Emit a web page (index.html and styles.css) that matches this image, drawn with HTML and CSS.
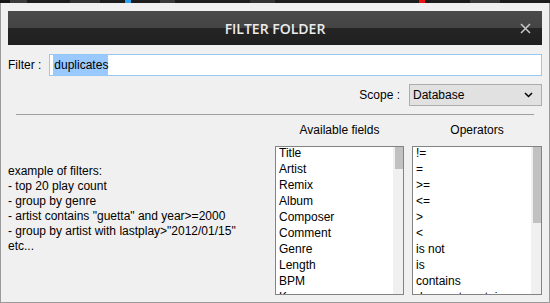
FILE: index.html
```html
<!DOCTYPE html>
<html lang="en">
  <head>
    <meta charset="UTF-8" />
    <title>Filter Folder</title>
    <link rel="stylesheet" href="styles.css">
  </head>
  <body>
    <div class="backdrop"></div>
    <div class="dialog">
      <div class="titlebar">
        <span class="title">FILTER FOLDER</span>
        <svg class="close" width="11" height="11" viewBox="0 0 11 11">
          <path d="M1 1 L10 10 M10 1 L1 10" stroke="#c8c8c8" stroke-width="1.5" fill="none" />
        </svg>
      </div>

      <div class="filter-row">
        <span class="label">Filter :</span>
        <div class="text-input"><span class="selected">duplicates</span></div>
      </div>

      <div class="scope-row">
        <span class="label">Scope :</span>
        <div class="select">
          <span>Database</span>
          <svg width="9" height="6" viewBox="0 0 9 6">
            <path d="M1 1 L4.5 4.5 L8 1" stroke="#000" stroke-width="1.5" fill="none" />
          </svg>
        </div>
      </div>

      <div class="separator"></div>

      <div class="fields-area">
        <div class="examples">
          <div>example of filters:</div>
          <div>- top 20 play count</div>
          <div>- group by genre</div>
          <div>- artist contains "guetta" and year&gt;=2000</div>
          <div>- group by artist with lastplay&gt;"2012/01/15"</div>
          <div>etc...</div>
        </div>

        <div class="column fields-col">
          <div class="col-head">Available fields</div>
          <div class="listbox">
            <ul class="items">
              <li>Title</li>
              <li>Artist</li>
              <li>Remix</li>
              <li>Album</li>
              <li>Composer</li>
              <li>Comment</li>
              <li>Genre</li>
              <li>Length</li>
              <li>BPM</li>
              <li>Key</li>
            </ul>
            <div class="scrollbar"><div class="thumb fields-thumb"></div></div>
          </div>
        </div>

        <div class="column ops-col">
          <div class="col-head">Operators</div>
          <div class="listbox">
            <ul class="items">
              <li>!=</li>
              <li>=</li>
              <li>&gt;=</li>
              <li>&lt;=</li>
              <li>&gt;</li>
              <li>&lt;</li>
              <li>is not</li>
              <li>is</li>
              <li>contains</li>
              <li>does not contain</li>
            </ul>
            <div class="scrollbar"><div class="thumb ops-thumb"></div></div>
          </div>
        </div>
      </div>
    </div>
  </body>
</html>
```

FILE: styles.css
```css
* {
  margin: 0;
  padding: 0;
  box-sizing: border-box;
}

body {
  width: 550px;
  height: 303px;
  overflow: hidden;
  background: #f0f0f0;
  font-family: "Liberation Sans", Arial, sans-serif;
  font-size: 12px;
  color: #000;
}

/* strip of the app window behind the dialog */
.backdrop {
  height: 3px;
  background: linear-gradient(to right,
    #151515 0 10px, #3c3c3c 10px 27px, #1c1c1c 27px 70px, #333 70px 100px,
    #1c1c1c 100px 125px, #2ba4f4 125px 131px, #1c1c1c 131px 160px,
    #3a3a3a 160px 175px, #1c1c1c 175px 250px, #333 250px 275px,
    #1c1c1c 275px 419px, #ee1111 419px 425px, #1c1c1c 425px 470px,
    #3a3a3a 470px 500px, #1c1c1c 500px);
}

.dialog {
  height: 300px;
  border: 1px solid #9a9a9a;
  border-top: none;
  padding: 8px 7px 0;
  background: #f0f0f0;
}

.titlebar {
  height: 34px;
  display: grid;
  grid-template-columns: 1fr auto 1fr;
  align-items: center;
  background: linear-gradient(#4b4b4b, #444 50%, #252525 50%, #1f1f1f);
}

.title {
  grid-column: 2;
  font-family: "Open Sans", sans-serif;
  font-size: 14px;
  font-weight: 600;
  color: #ececec;
}

.close {
  grid-column: 3;
  justify-self: end;
  margin-right: 11px;
}

.filter-row {
  display: flex;
  align-items: center;
  gap: 8px;
  margin-top: 9px;
}

.label {
  white-space: nowrap;
}

.text-input {
  flex: 1;
  height: 22px;
  border: 1px solid #95c8f2;
  background: #fff;
  padding-left: 3px;
  line-height: 20px;
}

.selected {
  display: inline-block;
  background: #99c9ff;
  padding-left: 1px;
}

.scope-row {
  display: flex;
  justify-content: flex-end;
  align-items: center;
  gap: 9px;
  margin-top: 8px;
}

.select {
  width: 133px;
  height: 22px;
  border: 1px solid #adadad;
  background: #e1e1e1;
  display: flex;
  align-items: center;
  justify-content: space-between;
  padding: 0 8px 0 3px;
}

.separator {
  height: 1px;
  margin: 8px 8px 0;
  background: #a0a0a0;
}

.fields-area {
  display: flex;
  gap: 8px;
  margin-top: 8px;
}

.examples {
  flex: 1;
  padding-top: 41px;
  line-height: 15px;
  white-space: nowrap;
}

.column {
  display: flex;
  flex-direction: column;
}

.fields-col {
  width: 129px;
}

.ops-col {
  width: 130px;
}

.col-head {
  text-align: center;
  line-height: 15px;
}

.listbox {
  margin-top: 8px;
  height: 149px;
  border: 1px solid #838383;
  background: #fff;
  display: flex;
  overflow: hidden;
}

.items {
  flex: 1;
  list-style: none;
  padding-left: 3px;
  white-space: nowrap;
  overflow: hidden;
}

.items li {
  height: 16px;
  line-height: 13px;
}

.scrollbar {
  width: 10px;
  background: #f0f0f0;
  padding-left: 2px;
}

.thumb {
  width: 8px;
  background: #c1c1c1;
}

.fields-thumb {
  height: 22px;
}

.ops-thumb {
  height: 76px;
}
```
